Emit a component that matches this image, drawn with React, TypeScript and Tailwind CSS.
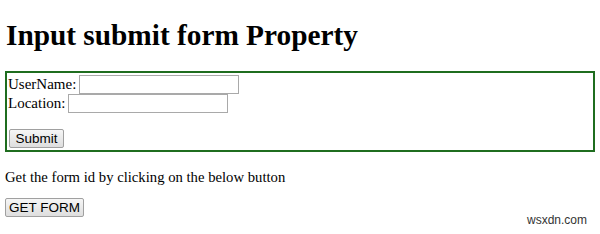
export default function App() {
  return (
    <div className="relative h-[234px] w-[600px] overflow-hidden bg-white px-[5px] font-['Liberation_Serif',serif] text-[15px] leading-[19px] text-black">
      <h1 className="ml-px pt-[18px] text-[29.3px] font-bold leading-[34px]">Input submit form Property</h1>
      <form className="mt-[19px] h-[81px] border-2 border-[#1f6d1f] px-px pt-[2px]">
        <div className="flex items-center">
          <span>UserName:</span>
          <input className="ml-[3px] h-[19px] w-[160px] border border-[#a9a9a9] bg-white" />
        </div>
        <div className="flex items-center">
          <span>Location:</span>
          <input className="ml-[3px] h-[19px] w-[160px] border border-[#a9a9a9] bg-white" />
        </div>
        <button
          type="button"
          className="mt-[16px] ml-px h-[19px] w-[55px] rounded-[2px] border border-[#a0a0a0] bg-[linear-gradient(#f6f6f6,#dedede)] font-['Liberation_Sans',sans-serif] text-[13.5px] leading-[17px]"
        >
          Submit
        </button>
      </form>
      <p className="mt-[16px] text-[14.7px] leading-[19px]">Get the form id by clicking on the below button</p>
      <button
        type="button"
        className="mt-[11px] h-[19px] w-[79px] rounded-[2px] border border-[#a0a0a0] bg-[linear-gradient(#f6f6f6,#dedede)] font-['Liberation_Sans',sans-serif] text-[13.5px] leading-[17px]"
      >
        GET FORM
      </button>
      <span className="absolute left-[527px] top-[211px] font-['Liberation_Sans',sans-serif] text-[12px] text-[#333]">wsxdn.com</span>
    </div>
  );
}
